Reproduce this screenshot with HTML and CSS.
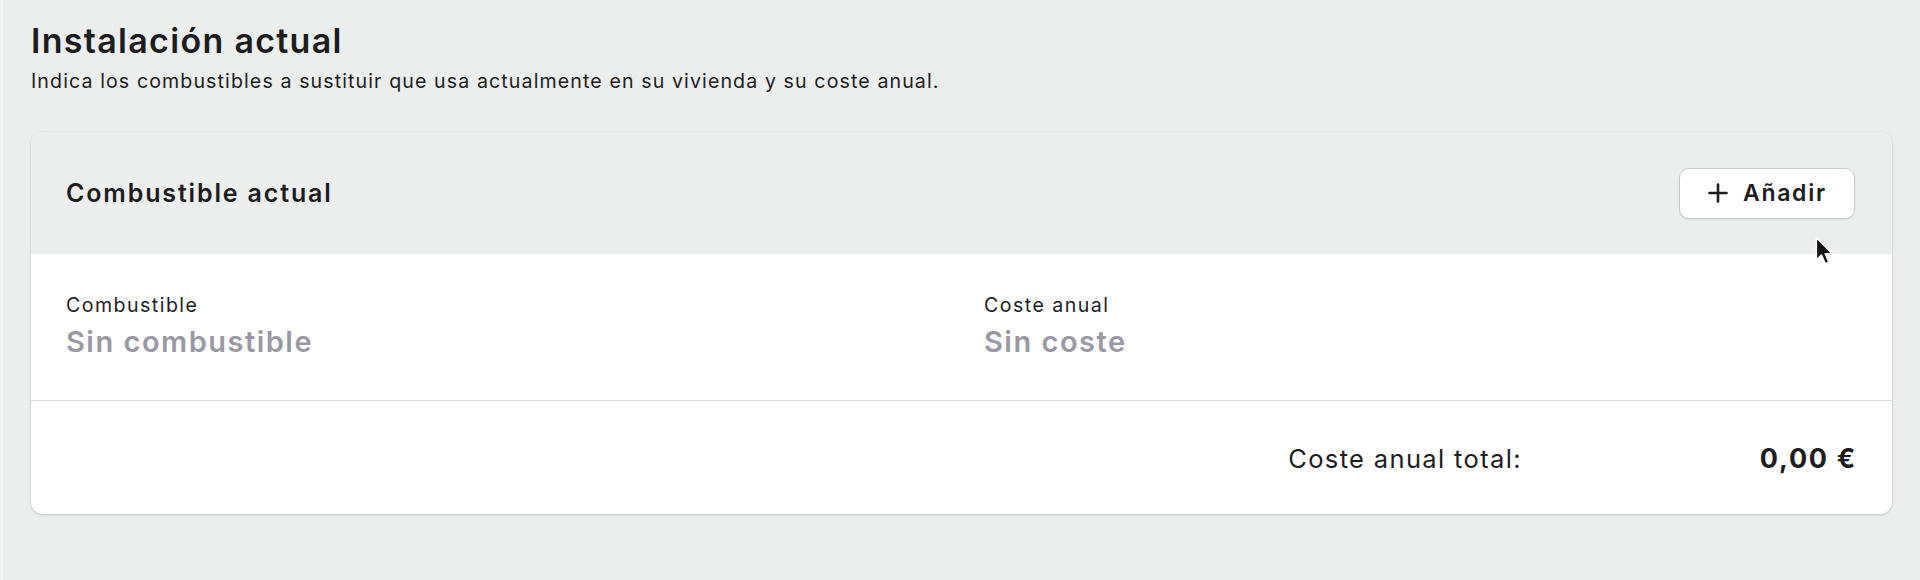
FILE: index.html
```html
<!DOCTYPE html>
<html lang="es">
<head>
<meta charset="utf-8">
<title>Instalación actual</title>
<link rel="stylesheet" href="styles.css">
</head>
<body>
<main class="page">
  <h1 class="title">Instalación actual</h1>
  <p class="subtitle">Indica los combustibles a sustituir que usa actualmente en su vivienda y su coste anual.</p>

  <section class="card">
    <header class="card-head">
      <h2 class="card-title">Combustible actual</h2>
      <button class="btn-add" type="button">
        <svg class="plus" viewBox="0 0 20 20" width="20" height="20" aria-hidden="true">
          <path d="M10 1.5v17M1.5 10h17" stroke="#1d1d1f" stroke-width="2.6" stroke-linecap="round" fill="none"/>
        </svg>
        <span>Añadir</span>
      </button>
      <svg class="cursor" viewBox="0 0 14 22" width="19" height="30" aria-hidden="true">
        <path d="M1 1 L1 17.5 L4.8 13.9 L7.6 20.4 L10.2 19.3 L7.5 13 L12.6 13 Z" fill="#111" stroke="#fff" stroke-width="1.1" stroke-linejoin="round"/>
      </svg>
    </header>

    <div class="card-body">
      <div class="field">
        <div class="field-label">Combustible</div>
        <div class="field-value">Sin combustible</div>
      </div>
      <div class="field">
        <div class="field-label">Coste anual</div>
        <div class="field-value">Sin coste</div>
      </div>
    </div>

    <footer class="card-foot">
      <span class="total-label">Coste anual total:</span>
      <span class="total-value">0,00 €</span>
    </footer>
  </section>
</main>
</body>
</html>
```

FILE: styles.css
```css
* { box-sizing: border-box; }

html, body {
  margin: 0;
  padding: 0;
}

body {
  background: #eceeed;
  font-family: Inter, "Noto Sans", "Liberation Sans", sans-serif;
  color: #1d1d1f;
  height: 580px;
  overflow: hidden;
  border-left: 3px solid #f4f5f5;
}

.page {
  padding: 21px 28px 0 28px;
}

.title {
  margin: 0;
  font-size: 34px;
  line-height: 40px;
  font-weight: 600;
  letter-spacing: 1.3px;
  color: #1d1d1f;
}

.subtitle {
  margin: 8px 0 0 0;
  font-size: 19.6px;
  line-height: 24px;
  font-weight: 400;
  letter-spacing: 1.1px;
  color: #1d1d1f;
}

.card {
  margin-top: 39px;
  background: #ffffff;
  border-radius: 12px;
  box-shadow: 0 1px 3px rgba(0, 0, 0, 0.16), 0 0 0 1px rgba(0, 0, 0, 0.015);
}

.card-head {
  position: relative;
  height: 122px;
  background: #eceeed;
  border-radius: 12px 12px 0 0;
  display: flex;
  align-items: center;
  justify-content: space-between;
  padding: 0 37px 0 35px;
}

.card-title {
  margin: 0;
  font-size: 25px;
  font-weight: 600;
  letter-spacing: 1.85px;
  color: #1d1d1f;
}

.btn-add {
  display: flex;
  align-items: center;
  gap: 15px;
  height: 51px;
  width: 176px;
  padding: 0 0 0 28px;
  background: #ffffff;
  border: 1.5px solid #c9cacb;
  border-radius: 10px;
  box-shadow: 0 1px 2px rgba(0, 0, 0, 0.08);
  font-family: inherit;
  font-size: 23px;
  font-weight: 600;
  letter-spacing: 1.7px;
  color: #1d1d1f;
  cursor: pointer;
}

.plus { flex: none; }

.cursor {
  position: absolute;
  left: 1784px;
  top: 104px;
}

.card-body {
  display: grid;
  grid-template-columns: 918px 1fr;
  padding: 39px 36px 0 35px;
  height: 147px;
  border-bottom: 1.5px solid #d9dada;
}

.field-label {
  font-size: 19.6px;
  line-height: 24px;
  font-weight: 400;
  letter-spacing: 1.45px;
  color: #1d1d1f;
}

.field-value {
  margin-top: 8px;
  font-size: 29px;
  line-height: 34px;
  font-weight: 600;
  letter-spacing: 1.5px;
  color: #9a99a3;
}

.card-foot {
  display: flex;
  align-items: center;
  justify-content: flex-end;
  height: 113px;
  padding: 1px 35px 0 36px;
}

.total-label {
  font-size: 25.5px;
  font-weight: 400;
  letter-spacing: 1.35px;
  color: #1d1d1f;
  margin-right: 238px;
}

.total-value {
  font-size: 27px;
  font-weight: 700;
  letter-spacing: 1.7px;
  color: #1d1d1f;
}
```
